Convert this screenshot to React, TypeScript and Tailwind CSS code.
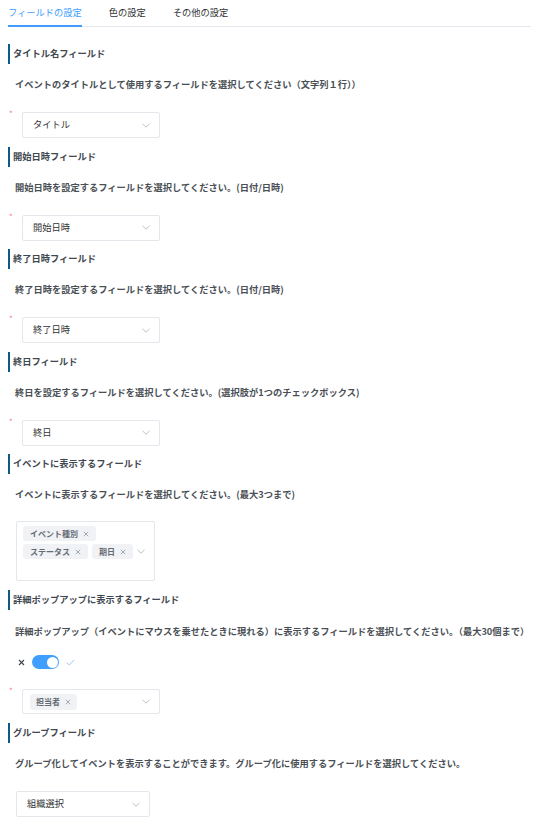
const font = { fontFamily: '"Noto Sans CJK JP", "Noto Sans", sans-serif' };

const tabs = ["フィールドの設定", "色の設定", "その他の設定"];

function Chevron() {
  return (
    <svg width="8" height="5" viewBox="0 0 8 5" fill="none" className="shrink-0">
      <path d="M0.5 0.8 L4 4.2 L7.5 0.8" stroke="#b4b8bf" strokeWidth="0.9" />
    </svg>
  );
}

function Cross({ className = "" }: { className?: string }) {
  return (
    <svg width="6" height="6" viewBox="0 0 6 6" fill="none" className={className}>
      <path d="M0.8 0.8 L5.2 5.2 M5.2 0.8 L0.8 5.2" stroke="#9aa0a8" strokeWidth="0.9" />
    </svg>
  );
}

function Tag({ label }: { label: string }) {
  return (
    <span className="flex h-[15px] items-center gap-[5px] rounded-[3px] bg-[#f0f2f5] px-[7px] text-[8px] font-bold text-[#666b73]">
      {label}
      <Cross />
    </span>
  );
}

function Heading({ title }: { title: string }) {
  return (
    <div className="flex h-5 items-center border-l-2 border-[#0b5a88] pl-[3px] text-[9.25px] font-bold text-[#3f4850]">
      {title}
    </div>
  );
}

function Desc({ text }: { text: string }) {
  return (
    <p className="ml-[7px] mt-[11px] flex h-5 items-center whitespace-nowrap text-[9.25px] font-semibold text-[#4a4f55]">
      {text}
    </p>
  );
}

function Required() {
  return <span className="mt-[-2px] w-[14px] self-start pl-[1px] text-[8px] leading-none text-[#f27c7c]">*</span>;
}

function Select({ value, width = "w-[138px]" }: { value: string; width?: string }) {
  return (
    <div className={`flex h-[26px] ${width} items-center justify-between rounded-[2px] border border-[#e3e6ea] pl-[10px] pr-[9px] text-[9.25px] text-[#333]`}>
      <span>{value}</span>
      <Chevron />
    </div>
  );
}

const simple = [
  {
    title: "タイトル名フィールド",
    desc: "イベントのタイトルとして使用するフィールドを選択してください（文字列１行））",
    value: "タイトル",
  },
  {
    title: "開始日時フィールド",
    desc: "開始日時を設定するフィールドを選択してください。(日付/日時)",
    value: "開始日時",
  },
  {
    title: "終了日時フィールド",
    desc: "終了日時を設定するフィールドを選択してください。(日付/日時)",
    value: "終了日時",
  },
  {
    title: "終日フィールド",
    desc: "終日を設定するフィールドを選択してください。(選択肢が1つのチェックボックス)",
    value: "終日",
  },
];

export default function App() {
  return (
    <div className="min-h-screen bg-white px-2" style={font}>
      <div className="flex gap-[27px] border-b border-[#e4e7ed]">
        {tabs.map((tab, i) => (
          <div
            key={tab}
            className={`-mb-px flex h-[27px] items-center border-b-2 text-[9.25px] ${
              i === 0 ? "border-[#409eff] text-[#409eff]" : "border-transparent text-[#303133]"
            }`}
          >
            {tab}
          </div>
        ))}
      </div>

      <div className="pt-[17px]">
        {simple.map((s) => (
          <section key={s.title} className="mb-[8.5px]">
            <Heading title={s.title} />
            <Desc text={s.desc} />
            <div className="mt-[17px] flex">
              <Required />
              <Select value={s.value} />
            </div>
          </section>
        ))}

        <section className="mb-[9px]">
          <Heading title="イベントに表示するフィールド" />
          <Desc text="イベントに表示するフィールドを選択してください。(最大3つまで)" />
          <div className="ml-2 mt-[16px] flex h-[60px] w-[139px] flex-wrap content-start items-center gap-x-1 gap-y-[3px] rounded-[2px] border border-[#e3e6ea] px-[6px] pt-[4px]">
            <Tag label="イベント種別" />
            <Tag label="ステータス" />
            <Tag label="期日" />
            <Chevron />
          </div>
        </section>

        <section className="mb-[9px]">
          <Heading title="詳細ポップアップに表示するフィールド" />
          <p className="ml-[7px] mt-[12px] flex h-5 items-center whitespace-nowrap text-[9.25px] font-semibold text-[#4a4f55]">
            詳細ポップアップ（イベントにマウスを乗せたときに現れる）に表示するフィールドを選択してください。（最大30個まで）
          </p>
          <div className="ml-[10px] mt-[10px] flex h-5 items-center">
            <svg width="7" height="7" viewBox="0 0 7 7" fill="none">
              <path d="M1 1 L6 6 M6 1 L1 6" stroke="#3b4650" strokeWidth="1.1" />
            </svg>
            <div className="ml-[7px] flex h-[14px] w-[27px] items-center justify-end rounded-full bg-[#409eff] pr-[1.5px]">
              <span className="h-[11px] w-[11px] rounded-full bg-white" />
            </div>
            <svg width="9" height="7" viewBox="0 0 9 7" fill="none" className="ml-[7px]">
              <path d="M0.8 3.6 L3.3 6 L8.2 1" stroke="#8fc1f5" strokeWidth="0.9" />
            </svg>
          </div>
          <div className="mt-[17px] flex">
            <Required />
            <div className="flex h-[25px] w-[138px] items-center justify-between rounded-[2px] border border-[#e3e6ea] pl-[7px] pr-[9px]">
              <span className="flex h-[16px] items-center gap-[5px] rounded-[3px] bg-[#f0f2f5] px-[6px] text-[8px] font-bold text-[#666b73]">
                担当者
                <Cross />
              </span>
              <Chevron />
            </div>
          </div>
        </section>

        <section>
          <Heading title="グループフィールド" />
          <Desc text="グループ化してイベントを表示することができます。グループ化に使用するフィールドを選択してください。" />
          <div className="ml-2 mt-[17px]">
            <Select value="組織選択" width="w-[134px]" />
          </div>
        </section>
      </div>
    </div>
  );
}
